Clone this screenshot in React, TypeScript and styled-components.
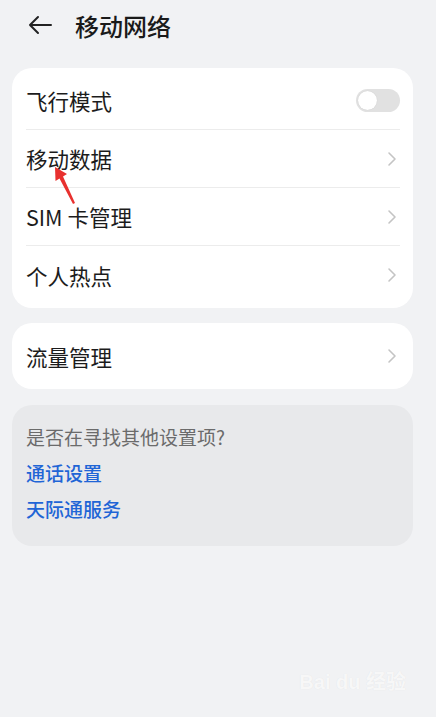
import styled, { createGlobalStyle } from "styled-components";

const GlobalStyle = createGlobalStyle`
  html, body {
    margin: 0;
    padding: 0;
    background: #f1f2f4;
  }
  body {
    font-family: "Noto Sans CJK SC", "Noto Sans", sans-serif;
  }
`;

const Page = styled.div`
  position: relative;
  width: 436px;
  height: 717px;
  box-sizing: border-box;
  padding: 0 23px 0 12px;
  background: #f1f2f4;
  overflow: hidden;
`;

const Header = styled.div`
  display: flex;
  align-items: center;
  height: 50px;
  padding-left: 15px;
  gap: 22px;
`;

const Title = styled.h1`
  margin: 0;
  font-size: 24px;
  font-weight: 500;
  color: #1a1a1a;
`;

const Card = styled.div<{ $muted?: boolean; $gap: number }>`
  margin-top: ${(p) => p.$gap}px;
  background: ${(p) => (p.$muted ? "#e8e9eb" : "#ffffff")};
  border-radius: 20px;
  padding: ${(p) => (p.$muted ? "20px 14px 25px" : "4px 13px 4px 14px")};
`;

const Row = styled.div<{ $last?: boolean }>`
  display: flex;
  align-items: center;
  justify-content: space-between;
  height: ${(p) => (p.$last ? "58px" : "57px")};
  border-bottom: ${(p) => (p.$last ? "none" : "1px solid #ececec")};
`;

const Label = styled.span`
  font-size: 21.5px;
  color: #1c1c1c;
  font-weight: 400;
`;

const Toggle = styled.div`
  width: 44px;
  height: 23px;
  border-radius: 12px;
  background: #e1e1e1;
  display: flex;
  align-items: center;
  padding-left: 2px;
  box-sizing: border-box;
`;

const Knob = styled.div`
  width: 19px;
  height: 19px;
  border-radius: 50%;
  background: #fff;
  box-shadow: 0 0 1px rgba(0, 0, 0, 0.15);
`;

const Hint = styled.div`
  font-size: 19px;
  line-height: 24px;
  color: #6b6b6b;
  margin-bottom: 12px;
`;

const Link = styled.div`
  font-size: 19px;
  color: #1f65d6;
  font-weight: 500;
  line-height: 24px;
  & + & {
    margin-top: 12px;
  }
`;

const Annotation = styled.svg`
  position: absolute;
  left: 48px;
  top: 161px;
  pointer-events: none;
`;

const Watermark = styled.div`
  position: absolute;
  right: 30px;
  bottom: 22px;
  font-family: "Liberation Sans", "Noto Sans CJK SC", sans-serif;
  font-size: 20px;
  font-weight: 700;
  color: rgba(255, 255, 255, 0.75);
  text-shadow: 0 0 1px rgba(0, 0, 0, 0.08);
`;

const Chevron = () => (
  <svg width="12" height="16" viewBox="0 0 12 16" style={{ marginRight: 2 }}>
    <path d="M3 2 L9 8 L3 14" fill="none" stroke="#c4c4c4" strokeWidth="1.6" strokeLinecap="round" strokeLinejoin="round" />
  </svg>
);

const BackArrow = () => (
  <svg width="26" height="22" viewBox="0 0 26 22">
    <path d="M24 11 H3 M11 3 L3 11 L11 19" fill="none" stroke="#222" strokeWidth="2" strokeLinecap="round" strokeLinejoin="round" />
  </svg>
);

const rows = ["移动数据", "SIM 卡管理", "个人热点"];

export default function App() {
  return (
    <>
      <GlobalStyle />
      <Page>
        <Header>
          <BackArrow />
          <Title>移动网络</Title>
        </Header>
        <Card $gap={18}>
          <Row>
            <Label>飞行模式</Label>
            <Toggle>
              <Knob />
            </Toggle>
          </Row>
          {rows.map((r, i) => (
            <Row key={r} $last={i === rows.length - 1}>
              <Label>{r}</Label>
              <Chevron />
            </Row>
          ))}
        </Card>
        <Card $gap={15}>
          <Row $last>
            <Label>流量管理</Label>
            <Chevron />
          </Row>
        </Card>
        <Card $muted $gap={16}>
          <Hint>是否在寻找其他设置项?</Hint>
          <Link>通话设置</Link>
          <Link>天际通服务</Link>
        </Card>
        <Annotation width="34" height="46" viewBox="0 0 34 46">
          <path d="M7 6 L19 13 L15 15.5 L27 42 L25 43 L11.5 17.5 L7.5 20 Z" fill="#e8312f" />
        </Annotation>
        <Watermark>Bai du 经验</Watermark>
      </Page>
    </>
  );
}
